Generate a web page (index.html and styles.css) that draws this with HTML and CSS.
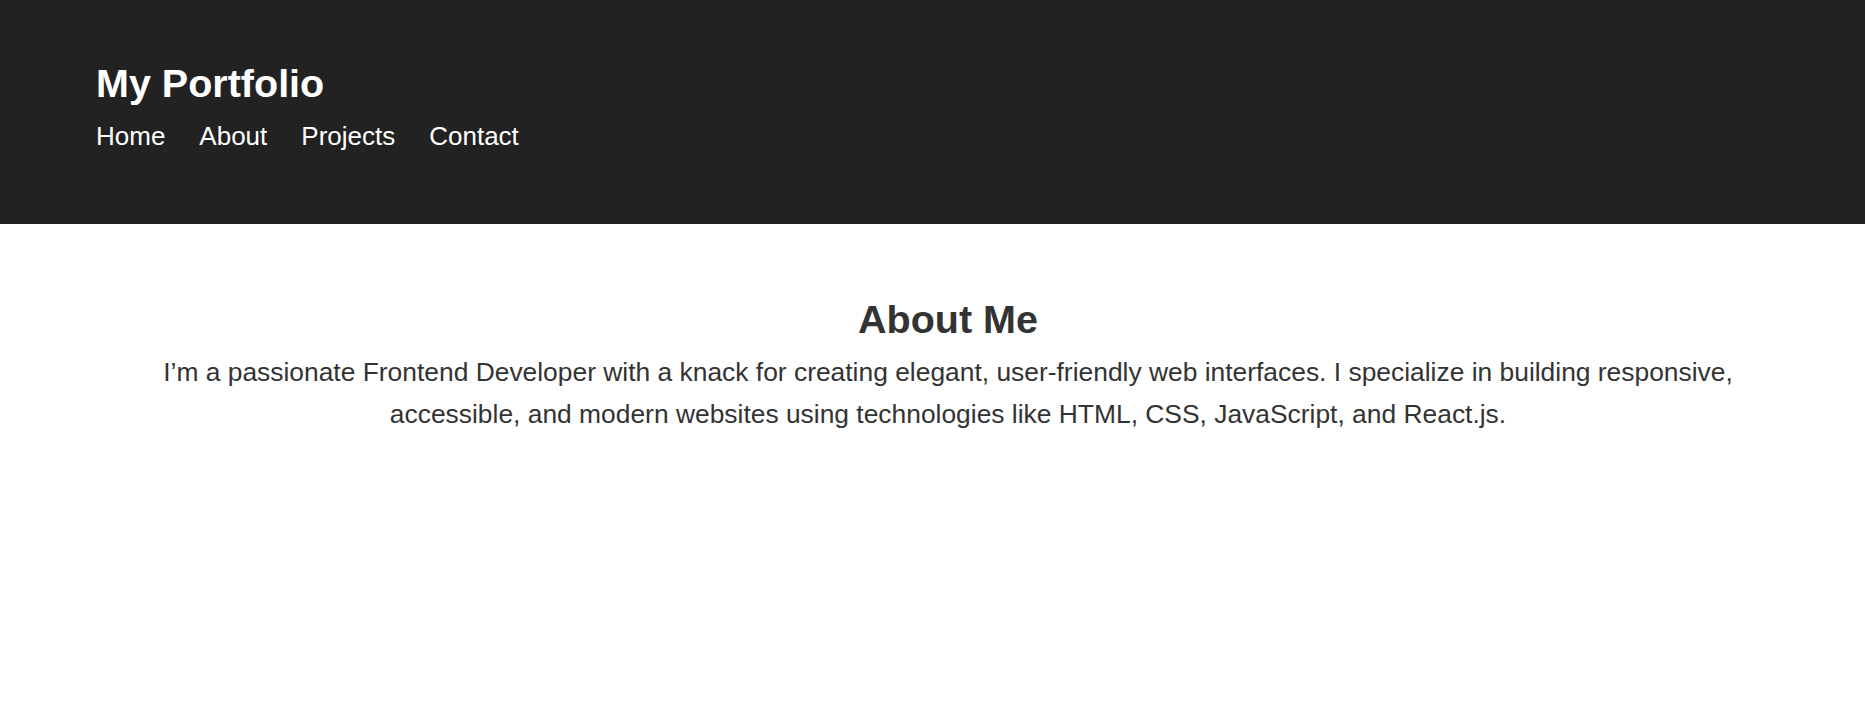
FILE: index.html
```html
<!DOCTYPE html>
<html lang="en">
<head>
<meta charset="utf-8">
<title>My Portfolio</title>
<link rel="stylesheet" href="styles.css">
</head>
<body>
<header class="site-header">
  <h1 class="site-title">My Portfolio</h1>
  <nav class="site-nav">
    <a href="#" class="nav-link">Home</a>
    <a href="#" class="nav-link">About</a>
    <a href="#" class="nav-link">Projects</a>
    <a href="#" class="nav-link">Contact</a>
  </nav>
</header>
<main>
  <section class="about">
    <h2 class="about-title">About Me</h2>
    <p class="about-text">I’m a passionate Frontend Developer with a knack for creating elegant, user-friendly web interfaces. I specialize in building responsive, accessible, and modern websites using technologies like HTML, CSS, JavaScript, and React.js.</p>
  </section>
</main>
</body>
</html>
```

FILE: styles.css
```css
* { box-sizing: border-box; }

html, body {
  margin: 0;
  padding: 0;
  background: #ffffff;
  font-family: "Liberation Sans", Arial, sans-serif;
  color: #333333;
}

.site-header {
  background: #222222;
  color: #ffffff;
  padding: 60px 96px 73px;
  height: 224px;
}

.site-title {
  margin: 0;
  font-size: 39.5px;
  line-height: 46px;
  font-weight: bold;
}

.site-nav {
  display: flex;
  gap: 34px;
  margin-top: 15px;
}

.nav-link {
  color: #ffffff;
  text-decoration: none;
  font-size: 26px;
  line-height: 30px;
}

.about {
  padding: 72px 96px 0 127px;
  text-align: center;
}

.about-title {
  margin: 0;
  font-size: 39.5px;
  line-height: 46px;
  font-weight: bold;
  color: #333333;
}

.about-text {
  margin: 10px 0 0;
  font-size: 26.4px;
  line-height: 41.6px;
  color: #333333;
}
```
